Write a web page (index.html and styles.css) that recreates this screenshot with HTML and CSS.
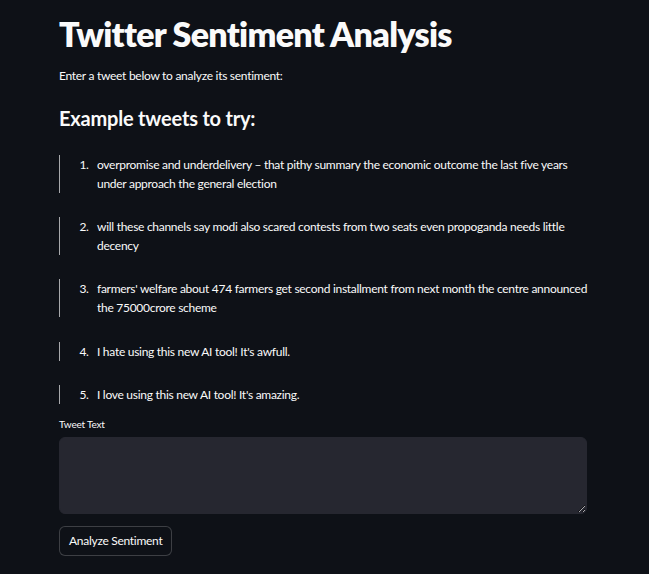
FILE: index.html
```html
<!DOCTYPE html>
<html lang="en">
<head>
<meta charset="utf-8">
<title>Twitter Sentiment Analysis</title>
<link rel="stylesheet" href="styles.css">
</head>
<body>
<main class="app">
  <h1 class="title">Twitter Sentiment Analysis</h1>
  <p class="intro">Enter a tweet below to analyze its sentiment:</p>
  <h3 class="subtitle">Example tweets to try:</h3>
  <blockquote class="quote"><ol class="examples" start="1"><li>overpromise and underdelivery – that pithy summary the economic outcome the last five years under approach the general election</li></ol></blockquote>
  <blockquote class="quote"><ol class="examples" start="2"><li>will these channels say modi also scared contests from two seats even propoganda needs little decency</li></ol></blockquote>
  <blockquote class="quote"><ol class="examples" start="3"><li>farmers' welfare about 474 farmers get second installment from next month the centre announced the 75000crore scheme</li></ol></blockquote>
  <blockquote class="quote"><ol class="examples" start="4"><li>I hate using this new AI tool! It's awfull.</li></ol></blockquote>
  <blockquote class="quote"><ol class="examples" start="5"><li>I love using this new AI tool! It's amazing.</li></ol></blockquote>
  <label class="field-label" for="tweet">Tweet Text</label>
  <textarea id="tweet" class="field"></textarea>
  <button class="btn" type="button">Analyze Sentiment</button>
</main>
</body>
</html>
```
FILE: styles.css
```css
html, body {
  margin: 0;
  background: #0e1117;
  color: #fafafa;
  font-family: Lato, "Noto Sans", sans-serif;
}
.app {
  width: 528px;
  padding: 0 0 0 59px;
  display: flex;
  flex-direction: column;
  align-items: flex-start;
}
.title {
  font-size: 34px;
  font-weight: 800;
  line-height: 1.2;
  margin: 14px 0 0;
  letter-spacing: -0.7px;
}
.intro {
  font-size: 12px;
  line-height: 19px;
  margin: 11px 0 0;
  letter-spacing: -0.28px;
}
.subtitle {
  font-size: 20px;
  font-weight: 700;
  line-height: 1.2;
  margin: 21px 0 0;
  letter-spacing: -0.2px;
}
.quote {
  margin: 24.3px 0 0;
  padding: 0;
  border-left: 1px solid rgba(250,250,250,0.65);
  width: 100%;
}
.subtitle + .quote { margin-top: 25px; }
.examples {
  margin: 0;
  padding: 0 0 0 37px;
  font-size: 12px;
  line-height: 19px;
  letter-spacing: -0.28px;
}
.examples li::marker {
  content: counter(list-item) ".\00a0\00a0\00a0";
}
.field-label {
  font-size: 10px;
  line-height: 14px;
  margin-top: 13px;
  letter-spacing: -0.2px;
}
.field {
  margin-top: 6px;
  width: 100%;
  height: 77px;
  box-sizing: border-box;
  background: #262730;
  border: 1px solid #262730;
  border-radius: 6px;
  color: #fafafa;
  resize: vertical;
  font-family: inherit;
}
.btn {
  margin-top: 12px;
  height: 30px;
  padding: 0 9px;
  background: #0e1117;
  color: #fafafa;
  border: 1px solid rgba(250,250,250,0.2);
  border-radius: 6px;
  font-family: inherit;
  font-size: 12px;
  letter-spacing: -0.28px;
}
```
